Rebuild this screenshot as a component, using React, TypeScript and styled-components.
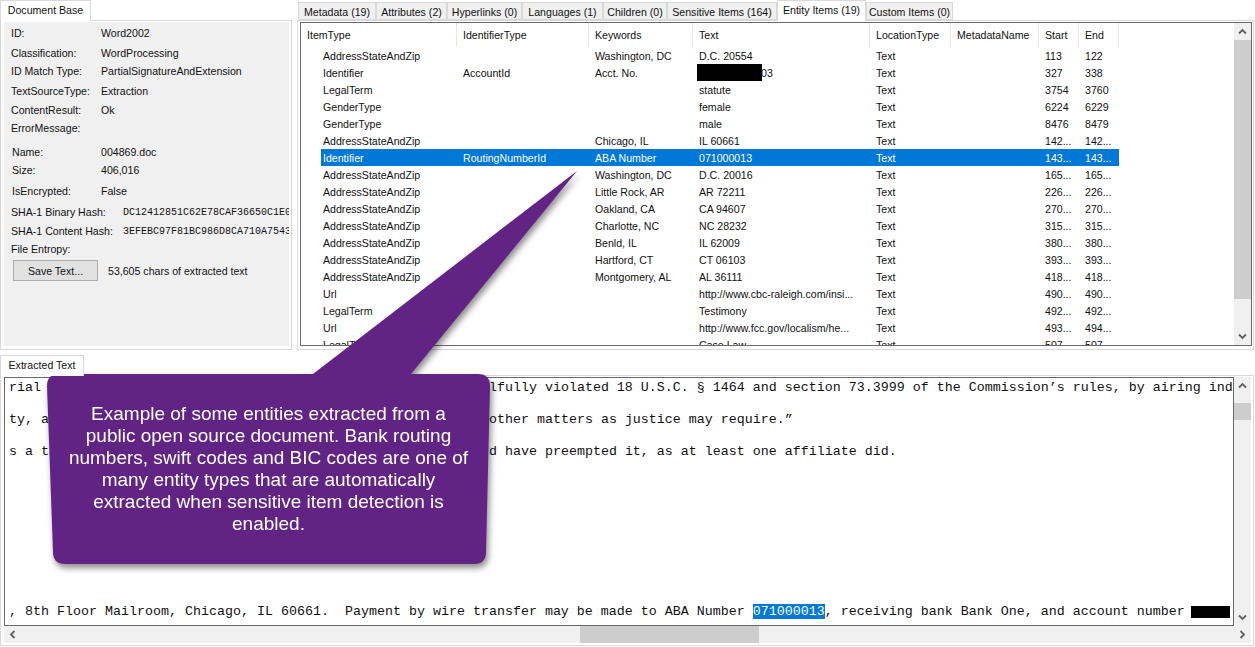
import React from "react";
import styled, { createGlobalStyle } from "styled-components";

const GlobalStyle = createGlobalStyle`
  html, body {
    margin: 0;
    padding: 0;
    background: #ffffff;
  }
  body {
    font-family: "Liberation Sans", Arial, sans-serif;
    font-size: 10.6px;
    color: #111111;
  }
`;

const Page = styled.div`
  position: relative;
  width: 1255px;
  height: 647px;
  overflow: hidden;
  background: #ffffff;
`;

const TopArea = styled.div`
  display: flex;
  height: 350px;
`;

const LeftPane = styled.div`
  width: 292px;
  display: flex;
  flex-direction: column;
`;

const RightPane = styled.div`
  flex: 1;
  margin: 0 1px 0 5px;
  display: flex;
  flex-direction: column;
  min-width: 0;
`;

const TabStrip = styled.div<{ $indent?: number }>`
  display: flex;
  align-items: flex-end;
  height: 20px;
  padding-left: ${(p) => p.$indent ?? 0}px;
`;

const Tab = styled.div<{ $w: number; $active?: boolean }>`
  box-sizing: border-box;
  width: ${(p) => p.$w}px;
  height: ${(p) => (p.$active ? 21 : 18)}px;
  margin-bottom: ${(p) => (p.$active ? -1 : 0)}px;
  position: ${(p) => (p.$active ? "relative" : "static")};
  z-index: 1;
  background: ${(p) => (p.$active ? "#ffffff" : "#f0f0f0")};
  border: 1px solid #d9d9d9;
  border-bottom: ${(p) => (p.$active ? "none" : "1px solid #d9d9d9")};
  display: flex;
  align-items: center;
  justify-content: center;
  padding: ${(p) => (p.$active ? "0 0 2px" : "1px 0 0")};
  white-space: nowrap;
  color: #111;
`;

const TabPanel = styled.div<{ $right: number }>`
  box-sizing: border-box;
  flex: 1;
  border: 1px solid #d9d9d9;
  padding: 1px ${(p) => p.$right}px 3px 2px;
  background: #ffffff;
  min-height: 0;
  display: flex;
`;

const InfoPanel = styled.div`
  flex: 1;
  margin-left: 1px;
  background: #f0f0f0;
  padding-top: 2px;
  overflow: hidden;
`;

const InfoRow = styled.div<{ $mt: number; $x?: number }>`
  display: flex;
  align-items: center;
  height: 16px;
  margin-top: ${(p) => p.$mt}px;
  padding-left: ${(p) => p.$x ?? 7}px;
  white-space: nowrap;
`;

const ButtonRow = styled.div`
  display: flex;
  align-items: center;
  height: 21px;
  margin-top: 3px;
  padding-left: 9px;
  white-space: nowrap;
`;

const InfoLabel = styled.div<{ $w?: number }>`
  width: ${(p) => p.$w ?? 90}px;
  flex-shrink: 0;
`;

const HashValue = styled.div`
  font-family: "Liberation Mono", monospace;
  font-size: 10px;
  overflow: hidden;
`;

const SaveButton = styled.button`
  box-sizing: border-box;
  width: 85px;
  height: 21px;
  margin-right: 10px;
  padding: 0;
  background: #e1e1e1;
  border: 1px solid #adadad;
  font: inherit;
  color: inherit;
`;

const ListBox = styled.div`
  box-sizing: border-box;
  flex: 1;
  display: flex;
  border: 1px solid #696969;
  min-width: 0;
  overflow: hidden;
`;

const ListBody = styled.div`
  flex: 1;
  min-width: 0;
  overflow: hidden;
`;

const HeaderRow = styled.div`
  display: flex;
  height: 24px;
`;

const HeaderCell = styled.div<{ $w: number }>`
  box-sizing: border-box;
  width: ${(p) => p.$w}px;
  padding-left: 6px;
  line-height: 25px;
  border-right: 1px solid #e5e5e5;
  white-space: nowrap;
  overflow: hidden;
`;

const DataRow = styled.div<{ $selected?: boolean }>`
  display: flex;
  width: 798px;
  height: 17px;
  margin-left: 20px;
  background: ${(p) => (p.$selected ? "#0078d7" : "transparent")};
  color: ${(p) => (p.$selected ? "#ffffff" : "#111111")};
`;

const DataCell = styled.div<{ $w: number; $first?: boolean }>`
  box-sizing: border-box;
  width: ${(p) => p.$w}px;
  padding-left: ${(p) => (p.$first ? 2 : 6)}px;
  line-height: 19px;
  height: 17px;
  white-space: nowrap;
  overflow: hidden;
`;

const Redacted = styled.span<{ $w: number; $h: number }>`
  display: inline-block;
  width: ${(p) => p.$w}px;
  height: ${(p) => p.$h}px;
  background: #000000;
  vertical-align: top;
`;

const RedactedCellLead = styled(Redacted)`
  margin: 0 -1px 0 -2px;
`;

const VScroll = styled.div<{ $thumbTop: number; $thumbH: number }>`
  width: 17px;
  flex-shrink: 0;
  display: flex;
  flex-direction: column;
  background: #f0f0f0;

  & > i {
    display: block;
    margin-top: ${(p) => p.$thumbTop}px;
    height: ${(p) => p.$thumbH}px;
    background: #cdcdcd;
  }
  & > span {
    flex: 1;
  }
`;

const HScroll = styled.div<{ $thumbLeft: number; $thumbW: number }>`
  height: 17px;
  flex-shrink: 0;
  display: flex;
  background: #f0f0f0;

  & > i {
    display: block;
    margin-left: ${(p) => p.$thumbLeft}px;
    width: ${(p) => p.$thumbW}px;
    background: #cdcdcd;
  }
  & > span {
    flex: 1;
  }
`;

const ArrowBox = styled.div`
  width: 17px;
  height: 17px;
  flex-shrink: 0;
  display: flex;
  align-items: center;
  justify-content: center;
`;

const BottomArea = styled.div`
  box-sizing: border-box;
  height: 291px;
  margin: 5px 1px 0 0;
  display: flex;
  flex-direction: column;
`;

const ExtractedPanel = styled.div`
  box-sizing: border-box;
  flex: 1;
  border: 1px solid #d9d9d9;
  padding: 1px 2px 2px 3px;
  display: flex;
  flex-direction: column;
  min-height: 0;
`;

const TextRegion = styled.div`
  flex: 1;
  display: flex;
  min-height: 0;
`;

const TextBox = styled.div`
  box-sizing: border-box;
  flex: 1;
  min-width: 0;
  border: 1px solid #696969;
  padding: 2px 0 0 4px;
  overflow: hidden;
`;

const TextLine = styled.div`
  height: 16px;
  line-height: 16px;
  font-family: "Liberation Mono", "Courier New", monospace;
  font-size: 13.33px;
  color: #111;
  white-space: pre;
`;

const Highlight = styled.span`
  background: #0078d7;
  color: #ffffff;
`;

const InlineRedact = styled(Redacted)`
  margin: 2px 0 0 -2px;
`;

const Callout = styled.div`
  position: absolute;
  left: 47px;
  top: 374px;
  width: 443px;
  height: 190px;
  filter: drop-shadow(2px 4px 3px rgba(0, 0, 0, 0.45));
`;

const CalloutShape = styled.svg`
  position: absolute;
  left: 0;
  top: -204px;
  overflow: visible;
`;

const CalloutText = styled.div`
  position: relative;
  padding-top: 29px;
  color: #ffffff;
  text-align: center;
  font-size: 19px;
  line-height: 22px;
`;

const COLS = [136, 132, 104, 177, 81, 88, 40, 40];

const tabs: [string, number, boolean?][] = [
  ["Metadata (19)", 78],
  ["Attributes (2)", 71],
  ["Hyperlinks (0)", 75],
  ["Languages (1)", 81],
  ["Children (0)", 64],
  ["Sensitive Items (164)", 110],
  ["Entity Items (19)", 89, true],
  ["Custom Items (0)", 87],
];

const A = "AddressStateAndZip";

const rows: string[][] = [
  [A, "", "Washington, DC", "D.C. 20554", "113", "122"],
  ["Identifier", "AccountId", "Acct. No.", "#03", "327", "338"],
  ["LegalTerm", "", "", "statute", "3754", "3760"],
  ["GenderType", "", "", "female", "6224", "6229"],
  ["GenderType", "", "", "male", "8476", "8479"],
  [A, "", "Chicago, IL", "IL 60661", "142...", "142..."],
  ["Identifier", "RoutingNumberId", "ABA Number", "071000013", "143...", "143..."],
  [A, "", "Washington, DC", "D.C. 20016", "165...", "165..."],
  [A, "", "Little Rock, AR", "AR 72211", "226...", "226..."],
  [A, "", "Oakland, CA", "CA 94607", "270...", "270..."],
  [A, "", "Charlotte, NC", "NC 28232", "315...", "315..."],
  [A, "", "Benld, IL", "IL 62009", "380...", "380..."],
  [A, "", "Hartford, CT", "CT 06103", "393...", "393..."],
  [A, "", "Montgomery, AL", "AL 36111", "418...", "418..."],
  ["Url", "", "", "http://www.cbc-raleigh.com/insi...", "490...", "490..."],
  ["LegalTerm", "", "", "Testimony", "492...", "492..."],
  ["Url", "", "", "http://www.fcc.gov/localism/he...", "493...", "494..."],
  ["LegalTerm", "", "", "Case Law", "507...", "507..."],
];

const Chevron = ({ dir }: { dir: "up" | "down" | "left" | "right" }) => {
  const rot = { up: 0, right: 90, down: 180, left: 270 }[dir];
  return (
    <svg width="9" height="9" viewBox="0 0 9 9" style={{ transform: `rotate(${rot}deg)` }}>
      <path d="M1 6.5 L4.5 3 L8 6.5" fill="none" stroke="#606060" strokeWidth="1.8" />
    </svg>
  );
};

const pad = (n: number) => " ".repeat(n);

const App: React.FC = () => {
  return (
    <Page>
      <GlobalStyle />
      <TopArea>
        <LeftPane>
          <TabStrip>
            <Tab $w={91} $active>Document Base</Tab>
          </TabStrip>
          <TabPanel $right={2}>
            <InfoPanel>
              <InfoRow $mt={1}><InfoLabel>ID:</InfoLabel>Word2002</InfoRow>
              <InfoRow $mt={4}><InfoLabel>Classification:</InfoLabel>WordProcessing</InfoRow>
              <InfoRow $mt={2}><InfoLabel>ID Match Type:</InfoLabel>PartialSignatureAndExtension</InfoRow>
              <InfoRow $mt={4}><InfoLabel>TextSourceType:</InfoLabel>Extraction</InfoRow>
              <InfoRow $mt={3}><InfoLabel>ContentResult:</InfoLabel>Ok</InfoRow>
              <InfoRow $mt={2}><InfoLabel>ErrorMessage:</InfoLabel></InfoRow>
              <InfoRow $mt={8} $x={8}><InfoLabel $w={89}>Name:</InfoLabel>004869.doc</InfoRow>
              <InfoRow $mt={2} $x={8}><InfoLabel $w={89}>Size:</InfoLabel>406,016</InfoRow>
              <InfoRow $mt={5} $x={8}><InfoLabel $w={89}>IsEncrypted:</InfoLabel>False</InfoRow>
              <InfoRow $mt={5}>
                <InfoLabel $w={112}>SHA-1 Binary Hash:</InfoLabel>
                <HashValue>DC12412851C62E78CAF36650C1E0</HashValue>
              </InfoRow>
              <InfoRow $mt={3}>
                <InfoLabel $w={112}>SHA-1 Content Hash:</InfoLabel>
                <HashValue>3EFEBC97F81BC986D8CA710A7543</HashValue>
              </InfoRow>
              <InfoRow $mt={2}><InfoLabel>File Entropy:</InfoLabel></InfoRow>
              <ButtonRow>
                <SaveButton>Save Text...</SaveButton>
                53,605 chars of extracted text
              </ButtonRow>
            </InfoPanel>
          </TabPanel>
        </LeftPane>

        <RightPane>
          <TabStrip $indent={1}>
            {tabs.map(([label, w, active]) => (
              <Tab key={label} $w={w} $active={active}>{label}</Tab>
            ))}
          </TabStrip>
          <TabPanel $right={1}>
            <ListBox>
              <ListBody>
                <HeaderRow>
                  <HeaderCell $w={156}>ItemType</HeaderCell>
                  <HeaderCell $w={132}>IdentifierType</HeaderCell>
                  <HeaderCell $w={104}>Keywords</HeaderCell>
                  <HeaderCell $w={177}>Text</HeaderCell>
                  <HeaderCell $w={81}>LocationType</HeaderCell>
                  <HeaderCell $w={88}>MetadataName</HeaderCell>
                  <HeaderCell $w={40}>Start</HeaderCell>
                  <HeaderCell $w={40}>End</HeaderCell>
                </HeaderRow>
                {rows.map((r, i) => (
                  <DataRow key={i} $selected={i === 6}>
                    <DataCell $w={COLS[0]} $first>{r[0]}</DataCell>
                    <DataCell $w={COLS[1]}>{r[1]}</DataCell>
                    <DataCell $w={COLS[2]}>{r[2]}</DataCell>
                    <DataCell $w={COLS[3]}>
                      {r[3] === "#03" ? (
                        <>
                          <RedactedCellLead $w={65} $h={17} />03
                        </>
                      ) : (
                        r[3]
                      )}
                    </DataCell>
                    <DataCell $w={COLS[4]}>Text</DataCell>
                    <DataCell $w={COLS[5]} />
                    <DataCell $w={COLS[6]}>{r[4]}</DataCell>
                    <DataCell $w={COLS[7]}>{r[5]}</DataCell>
                  </DataRow>
                ))}
              </ListBody>
              <VScroll $thumbTop={0} $thumbH={259}>
                <ArrowBox><Chevron dir="up" /></ArrowBox>
                <i />
                <span />
                <ArrowBox><Chevron dir="down" /></ArrowBox>
              </VScroll>
            </ListBox>
          </TabPanel>
        </RightPane>
      </TopArea>

      <BottomArea>
        <TabStrip>
          <Tab $w={84} $active>Extracted Text</Tab>
        </TabStrip>
        <ExtractedPanel>
          <TextRegion>
            <TextBox>
              <TextLine>rial{pad(53)}willfully violated 18 U.S.C. § 1464 and section 73.3999 of the Commission’s rules, by airing ind</TextLine>
              <TextLine />
              <TextLine>ty, a{pad(55)}other matters as justice may require.”</TextLine>
              <TextLine />
              <TextLine>s a ta{pad(54)}d have preempted it, as at least one affiliate did.</TextLine>
              {Array.from({ length: 9 }).map((_, i) => (
                <TextLine key={i} />
              ))}
              <TextLine>
                , 8th Floor Mailroom, Chicago, IL 60661.  Payment by wire transfer may be made to ABA Number <Highlight>071000013</Highlight>, receiving bank Bank One, and account number <InlineRedact $w={39} $h={12} />
              </TextLine>
            </TextBox>
            <VScroll $thumbTop={9} $thumbH={17}>
              <ArrowBox><Chevron dir="up" /></ArrowBox>
              <i />
              <span />
              <ArrowBox><Chevron dir="down" /></ArrowBox>
            </VScroll>
          </TextRegion>
          <HScroll $thumbLeft={559} $thumbW={179}>
            <ArrowBox><Chevron dir="left" /></ArrowBox>
            <i />
            <span />
            <ArrowBox><Chevron dir="right" /></ArrowBox>
          </HScroll>
        </ExtractedPanel>
      </BottomArea>

      <Callout>
        <CalloutShape width="443" height="394" viewBox="0 0 443 394">
          <path
            d="M12 204 L266 204 L530 1 L364 204 L431 204 Q443 204 443 216 L439 382 Q439 394 427 394 L18 394 Q6 394 6 382 L0 216 Q0 204 12 204 Z"
            fill="#612484"
          />
        </CalloutShape>
        <CalloutText>
          Example of some entities extracted from a<br />
          public open source document. Bank routing<br />
          numbers, swift codes and BIC codes are one of<br />
          many entity types that are automatically<br />
          extracted when sensitive item detection is<br />
          enabled.
        </CalloutText>
      </Callout>
    </Page>
  );
};

export default App;
